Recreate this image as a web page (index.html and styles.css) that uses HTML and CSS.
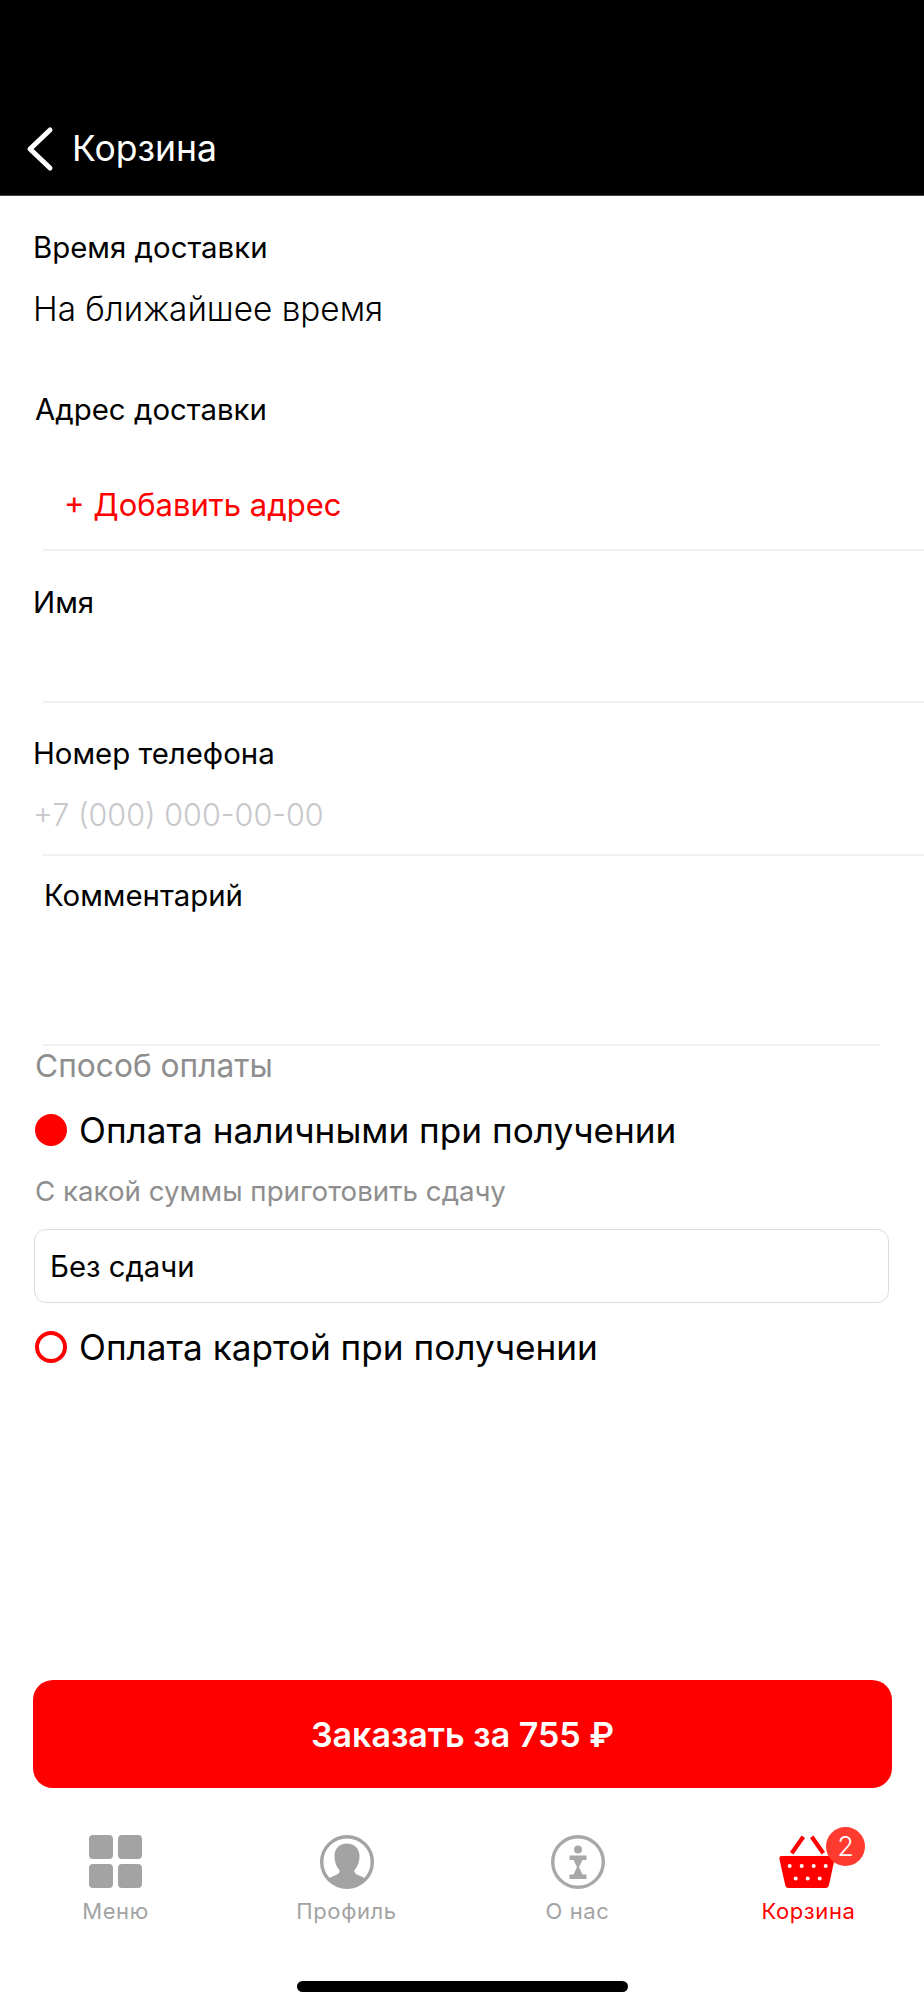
FILE: index.html
```html
<!DOCTYPE html>
<html lang="ru">
<head>
  <meta charset="UTF-8">
  <meta name="viewport" content="width=device-width, initial-scale=1.0">
  <title>Корзина</title>
  <link rel="stylesheet" href="styles.css">
</head>
<body>
  <header class="topbar">
    <svg class="back" width="30" height="46" viewBox="0 0 30 46">
      <path d="M25 4 L5 23 L25 42" fill="none" stroke="#fff" stroke-width="5" stroke-linecap="round" stroke-linejoin="round"/>
    </svg>
    <span class="topbar-title">Корзина</span>
  </header>

  <main class="page">
    <div class="label time-label">Время доставки</div>
    <div class="value time-value">На ближайшее время</div>

    <div class="label address-label">Адрес доставки</div>
    <div class="add-address">+ Добавить адрес</div>
    <div class="divider address-line"></div>

    <div class="label name-label">Имя</div>
    <div class="name-input"></div>
    <div class="divider"></div>

    <div class="label phone-label">Номер телефона</div>
    <div class="value phone-value">+7 (000) 000-00-00</div>
    <div class="divider phone-line"></div>

    <div class="label comment-label">Комментарий</div>
    <div class="comment-input"></div>
    <div class="divider comment-line"></div>

    <div class="pay-title">Способ оплаты</div>
    <div class="radio-row cash-row">
      <span class="radio checked"></span>
      <span>Оплата наличными при получении</span>
    </div>
    <div class="change-title">С какой суммы приготовить сдачу</div>
    <div class="change-box">Без сдачи</div>
    <div class="radio-row card-row">
      <span class="radio"></span>
      <span>Оплата картой при получении</span>
    </div>

    <div class="spacer"></div>
    <button class="order-btn">Заказать за 755 ₽</button>
  </main>

  <nav class="tabs">
    <div class="tab">
      <div class="tab-icon grid-icon"><i></i><i></i><i></i><i></i></div>
      <span>Меню</span>
    </div>
    <div class="tab">
      <svg class="tab-icon" width="54" height="54" viewBox="0 0 54 54">
        <defs><clipPath id="inner"><circle cx="27" cy="27" r="25"/></clipPath></defs>
        <circle cx="27" cy="27" r="25.3" fill="none" stroke="#a3a3a3" stroke-width="3.4"/>
        <path clip-path="url(#inner)" d="M27 8.5 C19.5 8.5 14.5 13.5 14.5 21 C14.5 27 16.5 32 19.5 35 C20 37 19 38.5 17 39.5 L7 44 L7 54 L47 54 L47 44 L37 39.5 C35 38.5 34 37 34.5 35 C37.5 32 39.5 27 39.5 21 C39.5 13.5 34.5 8.5 27 8.5 Z" fill="#a3a3a3"/>
      </svg>
      <span>Профиль</span>
    </div>
    <div class="tab">
      <svg class="tab-icon" width="54" height="54" viewBox="0 0 54 54">
        <circle cx="27" cy="27" r="25.3" fill="none" stroke="#a8a8a8" stroke-width="3.4"/>
        <circle cx="27" cy="14.5" r="4" fill="#a8a8a8"/>
        <path d="M18.5 20.5 H35.5 V25 H31.5 L28 32 L31.5 39.5 H35.5 V44 H18.5 V39.5 H22.5 L26 32 L22.5 25 H18.5 Z" fill="#a8a8a8"/>
      </svg>
      <span>О нас</span>
    </div>
    <div class="tab active">
      <div class="basket-wrap">
        <svg class="tab-icon" width="56" height="54" viewBox="0 0 56 54">
          <path d="M12.7 18.3 L24.3 1.7 M32.7 1.7 L44.3 18.3" fill="none" stroke="#ff0000" stroke-width="4.2"/>
          <path d="M2.5 21 H53.5 Q56 21 55.6 24 L50 50 Q49.3 53 46.5 53 H9.5 Q6.7 53 6.2 50 L0.4 24 Q0 21 2.5 21 Z" fill="#ff0000"/>
          <g fill="#fff">
            <circle cx="10.7" cy="31" r="2"/><circle cx="22.7" cy="31" r="2"/><circle cx="34.7" cy="31" r="2"/><circle cx="46.7" cy="31" r="2"/>
            <circle cx="16.7" cy="43.5" r="2"/><circle cx="28.7" cy="43.5" r="2"/><circle cx="40.7" cy="43.5" r="2"/>
          </g>
        </svg>
        <span class="badge">2</span>
      </div>
      <span>Корзина</span>
    </div>
  </nav>

  <div class="home-bar"><div class="home-pill"></div></div>
</body>
</html>
```

FILE: styles.css
```css
* {
  box-sizing: border-box;
}

body {
  margin: 0;
  width: 924px;
  height: 2000px;
  display: flex;
  flex-direction: column;
  background: #fff;
  color: #000;
  font-family: Inter, "Noto Sans", sans-serif;
  overflow: hidden;
}

/* top black bar */
.topbar {
  height: 196px;
  flex-shrink: 0;
  background: #000;
  border-bottom: 1px solid #444;
  display: flex;
  align-items: flex-end;
  padding: 0 0 23px 25px;
  gap: 17px;
  color: #fff;
}

.back {
  display: block;
}

.topbar-title {
  font-size: 35.5px;
  line-height: 46px;
}

.page {
  flex: 1;
  display: flex;
  flex-direction: column;
}

.label {
  font-size: 29.4px;
  line-height: 34px;
  padding-left: 33px;
}

.value {
  font-size: 33.3px;
  font-weight: 300;
  line-height: 40px;
  padding-left: 33px;
}

.divider {
  height: 2px;
  margin-left: 43px;
  background: #f0f0f0;
  flex-shrink: 0;
}

.time-label { margin-top: 35px; }
.time-value { margin-top: 24px; }

.address-label {
  margin-top: 64px;
  padding-left: 35px;
}

.add-address {
  margin-top: 58px;
  padding-left: 64px;
  font-size: 31px;
  line-height: 40px;
  color: #ff0000;
}

.address-line { margin-top: 24px; }

.name-label { margin-top: 35px; }
.name-input { height: 81px; }

.phone-label { margin-top: 34px; }
.phone-value {
  margin-top: 24px;
  font-size: 30.5px;
  color: #c7c7cc;
}
.phone-line { margin-top: 19px; }

.comment-label {
  margin-top: 23px;
  padding-left: 44px;
}
.comment-input { height: 131px; }
.comment-line { margin-right: 44px; }

.pay-title {
  margin-top: 3px;
  padding-left: 35px;
  font-size: 31.7px;
  line-height: 34px;
  color: #8e8e8e;
}

.radio-row {
  height: 44px;
  padding-left: 35px;
  display: flex;
  align-items: center;
  gap: 12px;
  font-size: 35.2px;
}

.cash-row { margin-top: 25px; }
.card-row { margin-top: 22px; }

.radio {
  width: 32px;
  height: 32px;
  border: 4px solid #ff0000;
  border-radius: 50%;
  flex-shrink: 0;
}

.radio.checked {
  background: #ff0000;
}

.change-title {
  margin-top: 22px;
  padding-left: 35px;
  font-size: 27.7px;
  line-height: 34px;
  color: #8e8e8e;
}

.change-box {
  margin: 21px 35px 0 34px;
  height: 74px;
  padding-left: 15px;
  display: flex;
  align-items: center;
  border: 1px solid #dcdcdc;
  border-radius: 12px;
  font-size: 29.3px;
}

.spacer {
  flex: 1;
}

.order-btn {
  display: block;
  width: 859px;
  height: 108px;
  margin: 0 0 34px 33px;
  padding: 0;
  border: 0;
  border-radius: 20px;
  background: #ff0000;
  color: #fff;
  font-family: inherit;
  font-size: 34px;
  font-weight: 600;
}

/* bottom tabs */
.tabs {
  height: 132px;
  flex-shrink: 0;
  display: grid;
  grid-template-columns: repeat(4, 1fr);
  padding-top: 13px;
}

.tab {
  display: flex;
  flex-direction: column;
  align-items: center;
  gap: 9px;
  font-size: 22px;
  letter-spacing: 0.6px;
  line-height: 26px;
  color: #a3a3a3;
}

.tab.active {
  color: #ff0000;
}

.tab-icon {
  display: block;
  width: 54px;
  height: 54px;
}

.basket-wrap {
  position: relative;
  width: 56px;
  height: 54px;
  margin-right: 3px;
}

.basket-wrap .tab-icon {
  width: 56px;
}

.grid-icon {
  display: grid;
  grid-template-columns: 24px 24px;
  grid-template-rows: 24px 24px;
  gap: 5px;
}

.grid-icon i {
  background: #a3a3a3;
  border-radius: 4px;
}

.badge {
  position: absolute;
  top: -8px;
  left: 47px;
  width: 39px;
  height: 39px;
  border-radius: 50%;
  background: #ff3b30;
  color: #fff;
  font-size: 27px;
  font-weight: 300;
  line-height: 39px;
  text-align: center;
  letter-spacing: 0;
}

.home-bar {
  height: 46px;
  flex-shrink: 0;
  display: flex;
  justify-content: center;
  padding-top: 27px;
}

.home-pill {
  width: 331px;
  height: 11px;
  border-radius: 6px;
  background: #000;
}
```
